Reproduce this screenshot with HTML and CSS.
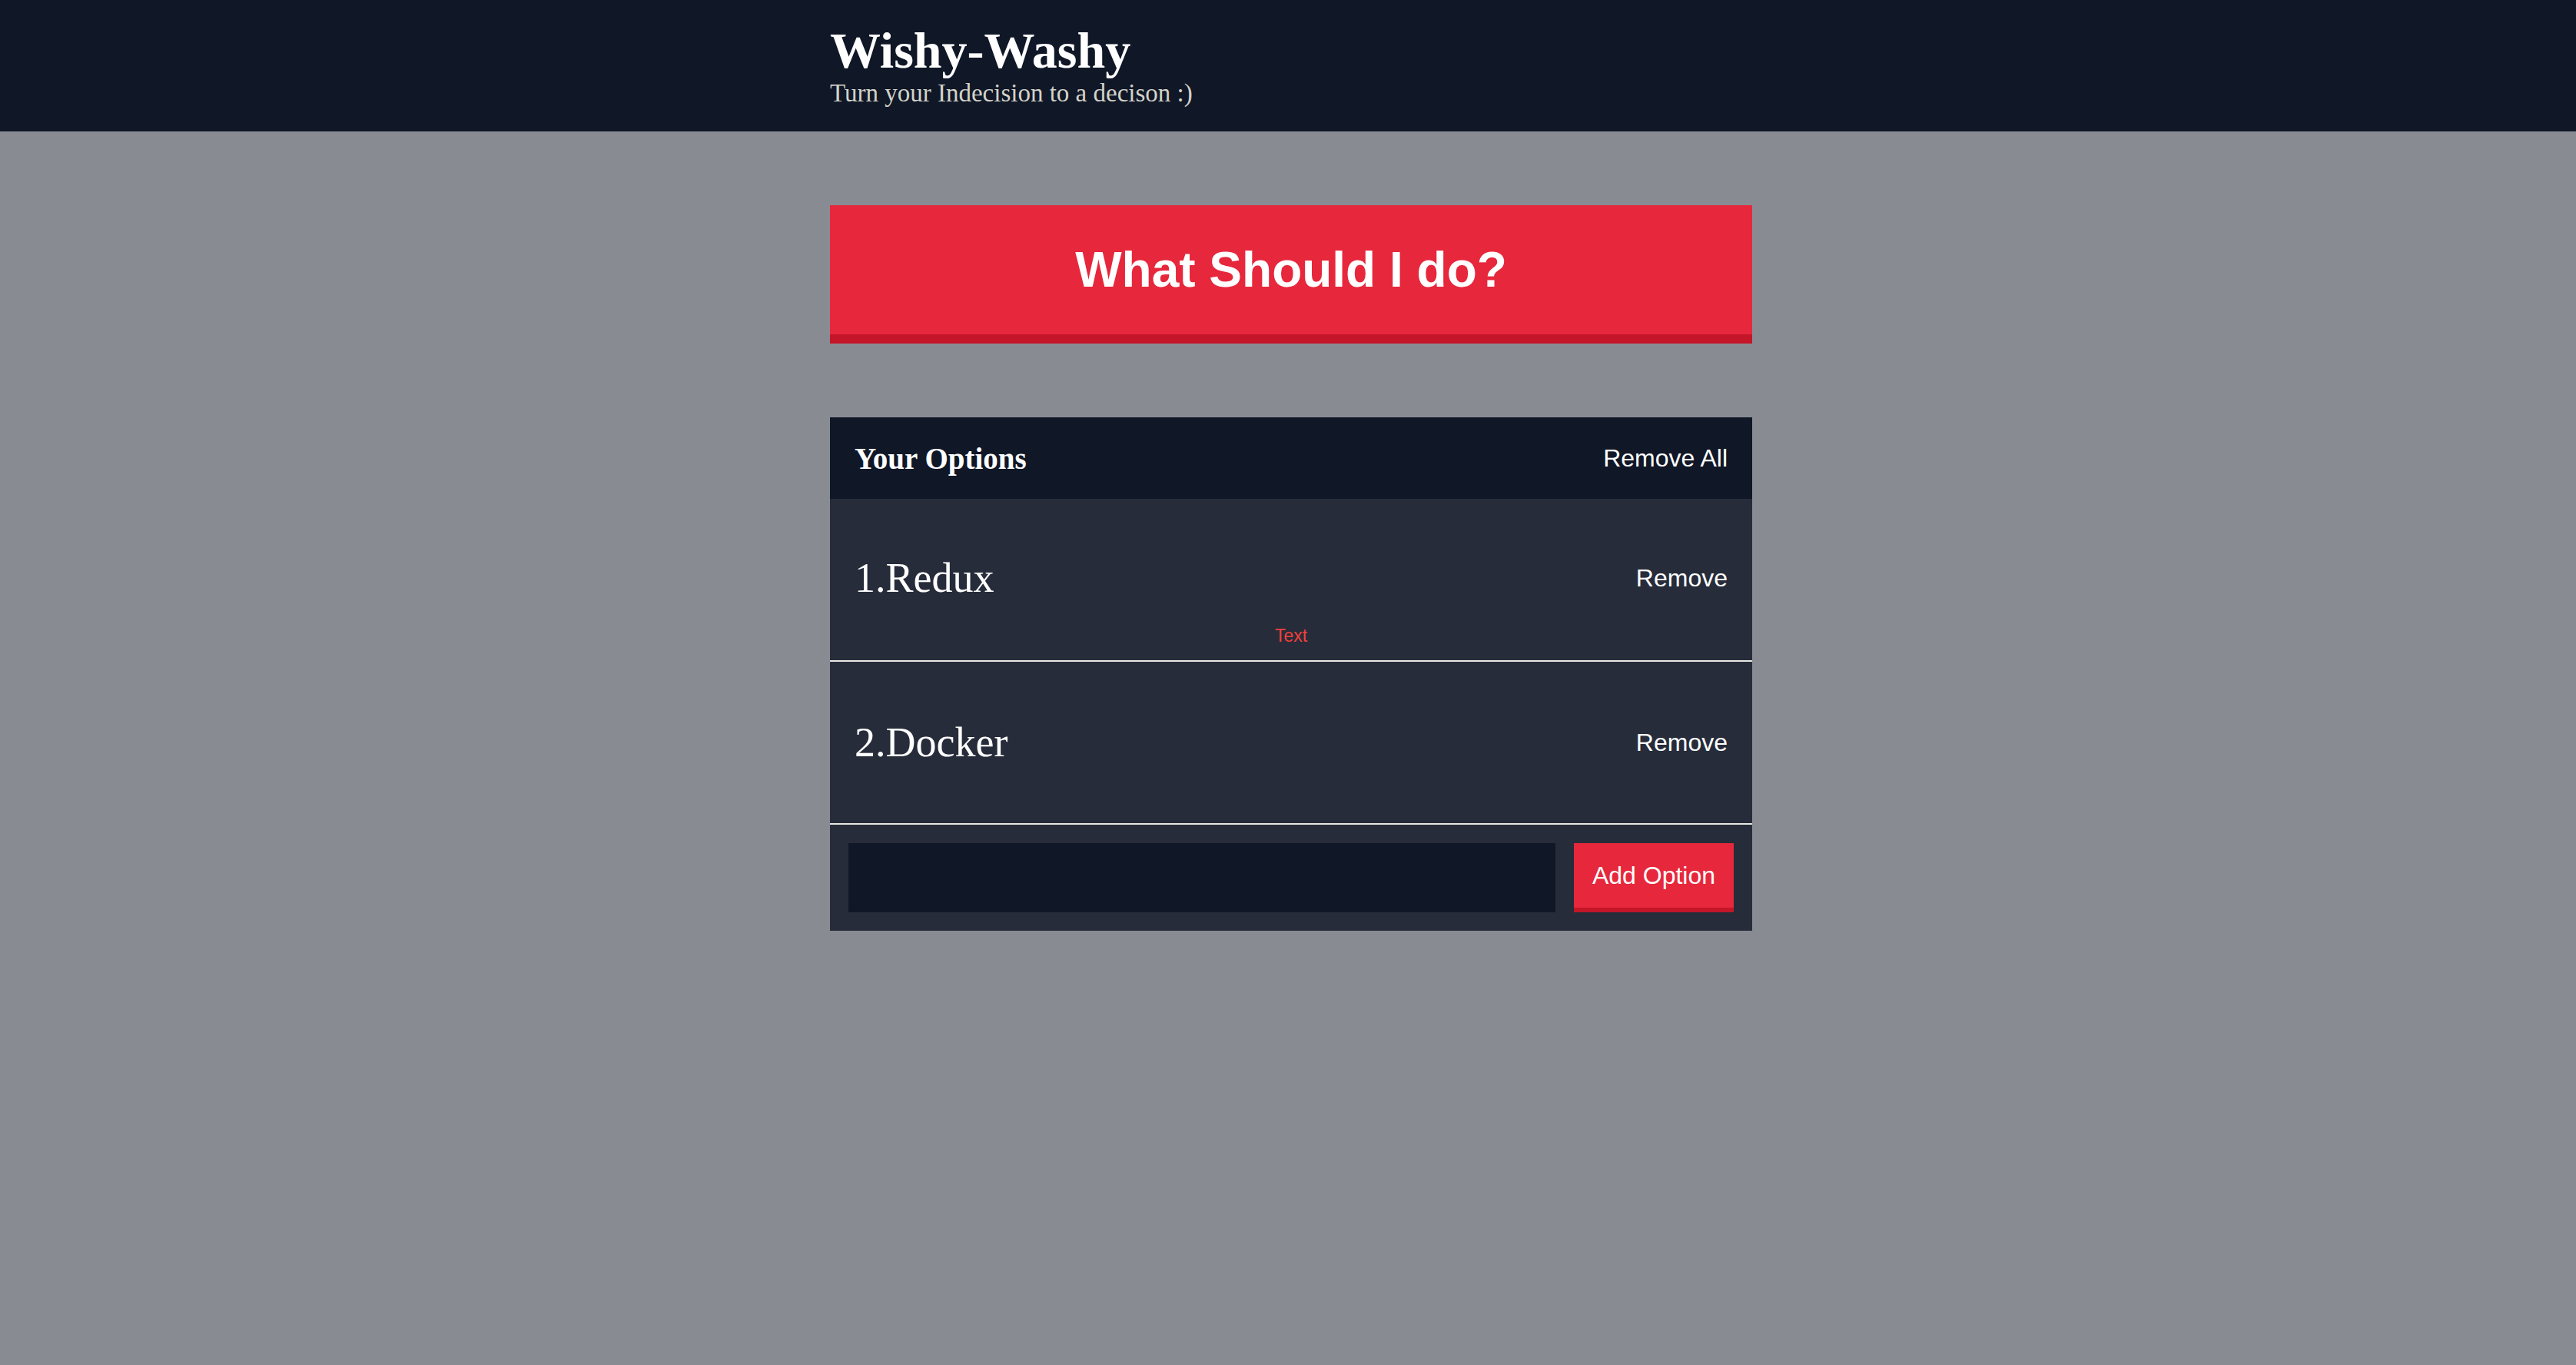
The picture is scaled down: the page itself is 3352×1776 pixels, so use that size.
FILE: index.html
```html
<!DOCTYPE html>
<html lang="en">
<head>
<meta charset="utf-8">
<title>Wishy-Washy</title>
<link rel="stylesheet" href="styles.css">
</head>
<body>
  <header class="header">
    <div class="container">
      <h1 class="header__title">Wishy-Washy</h1>
      <h2 class="header__subtitle">Turn your Indecision to a decison :)</h2>
    </div>
  </header>
  <main class="container main">
    <button class="big-button">What Should I do?</button>
    <section class="widget">
      <div class="widget-header">
        <h3 class="widget-header__title">Your Options</h3>
        <button class="button--link">Remove All</button>
      </div>
      <div class="option">
        <p class="option__text">1.Redux</p>
        <button class="button--link">Remove</button>
        <span class="option__error">Text</span>
      </div>
      <div class="option">
        <p class="option__text">2.Docker</p>
        <button class="button--link">Remove</button>
      </div>
      <form class="add-option">
        <input class="add-option__input" type="text" name="option">
        <button class="button" type="button">Add Option</button>
      </form>
    </section>
  </main>
</body>
</html>
```
FILE: styles.css
```css
* { box-sizing: border-box; }
html, body { margin: 0; padding: 0; }
body {
  background: #898b93;
  font-family: "Liberation Sans", Arial, sans-serif;
  color: #ffffff;
}
.container {
  width: 1200px;
  margin-left: calc(50% - 596px);
}
.header {
  background: #101727;
  height: 171px;
  padding-top: 28px;
}
.header__title {
  margin: 0;
  font-family: "Liberation Serif", "Times New Roman", serif;
  font-weight: 700;
  font-size: 66px;
  line-height: normal;
  color: #ffffff;
}
.header__subtitle {
  margin: -1px 0 0;
  font-family: "Liberation Serif", "Times New Roman", serif;
  font-weight: 400;
  font-size: 33px;
  line-height: normal;
  color: #d3d2c8;
}
.main {
  padding-top: 96px;
}
.big-button {
  display: flex;
  align-items: center;
  justify-content: center;
  width: 100%;
  height: 180px;
  margin: 0 0 96px;
  padding: 0;
  border: none;
  border-bottom: 12px solid #c31628;
  background: #e6273c;
  color: #ffffff;
  font-family: "Liberation Sans", Arial, sans-serif;
  font-weight: 700;
  font-size: 64px;
}
.widget {
  background: #262c3a;
}
.widget-header {
  display: flex;
  align-items: center;
  justify-content: space-between;
  height: 106px;
  padding: 0 32px;
  background: #101727;
}
.widget-header__title {
  margin: 0;
  font-family: "Liberation Serif", "Times New Roman", serif;
  font-weight: 700;
  font-size: 39px;
  color: #ffffff;
}
.button--link {
  background: none;
  border: none;
  padding: 0;
  color: #ffffff;
  font-family: "Liberation Sans", Arial, sans-serif;
  font-size: 32px;
}
.option {
  position: relative;
  display: flex;
  align-items: center;
  justify-content: space-between;
  height: 212px;
  padding: 0 32px 4px;
  border-bottom: 2px solid #e8e8e3;
}
.option + .option { padding-bottom: 0; }
.option__text {
  margin: 0;
  font-family: "Liberation Serif", "Times New Roman", serif;
  font-size: 54px;
  color: #ffffff;
}
.option__error {
  position: absolute;
  left: 0;
  right: 0;
  top: 165px;
  text-align: center;
  font-size: 23px;
  color: #f2403a;
}
.add-option {
  display: flex;
  gap: 24px;
  margin: 0;
  padding: 24px;
}
.add-option__input {
  flex: 1;
  height: 90px;
  border: none;
  background: #101727;
  color: #ffffff;
  font-size: 32px;
  padding: 0 16px;
  outline: none;
}
.button {
  width: 208px;
  height: 90px;
  padding: 0;
  border: none;
  border-bottom: 6px solid #c31628;
  background: #e6273c;
  color: #ffffff;
  font-family: "Liberation Sans", Arial, sans-serif;
  font-size: 32px;
}
```
